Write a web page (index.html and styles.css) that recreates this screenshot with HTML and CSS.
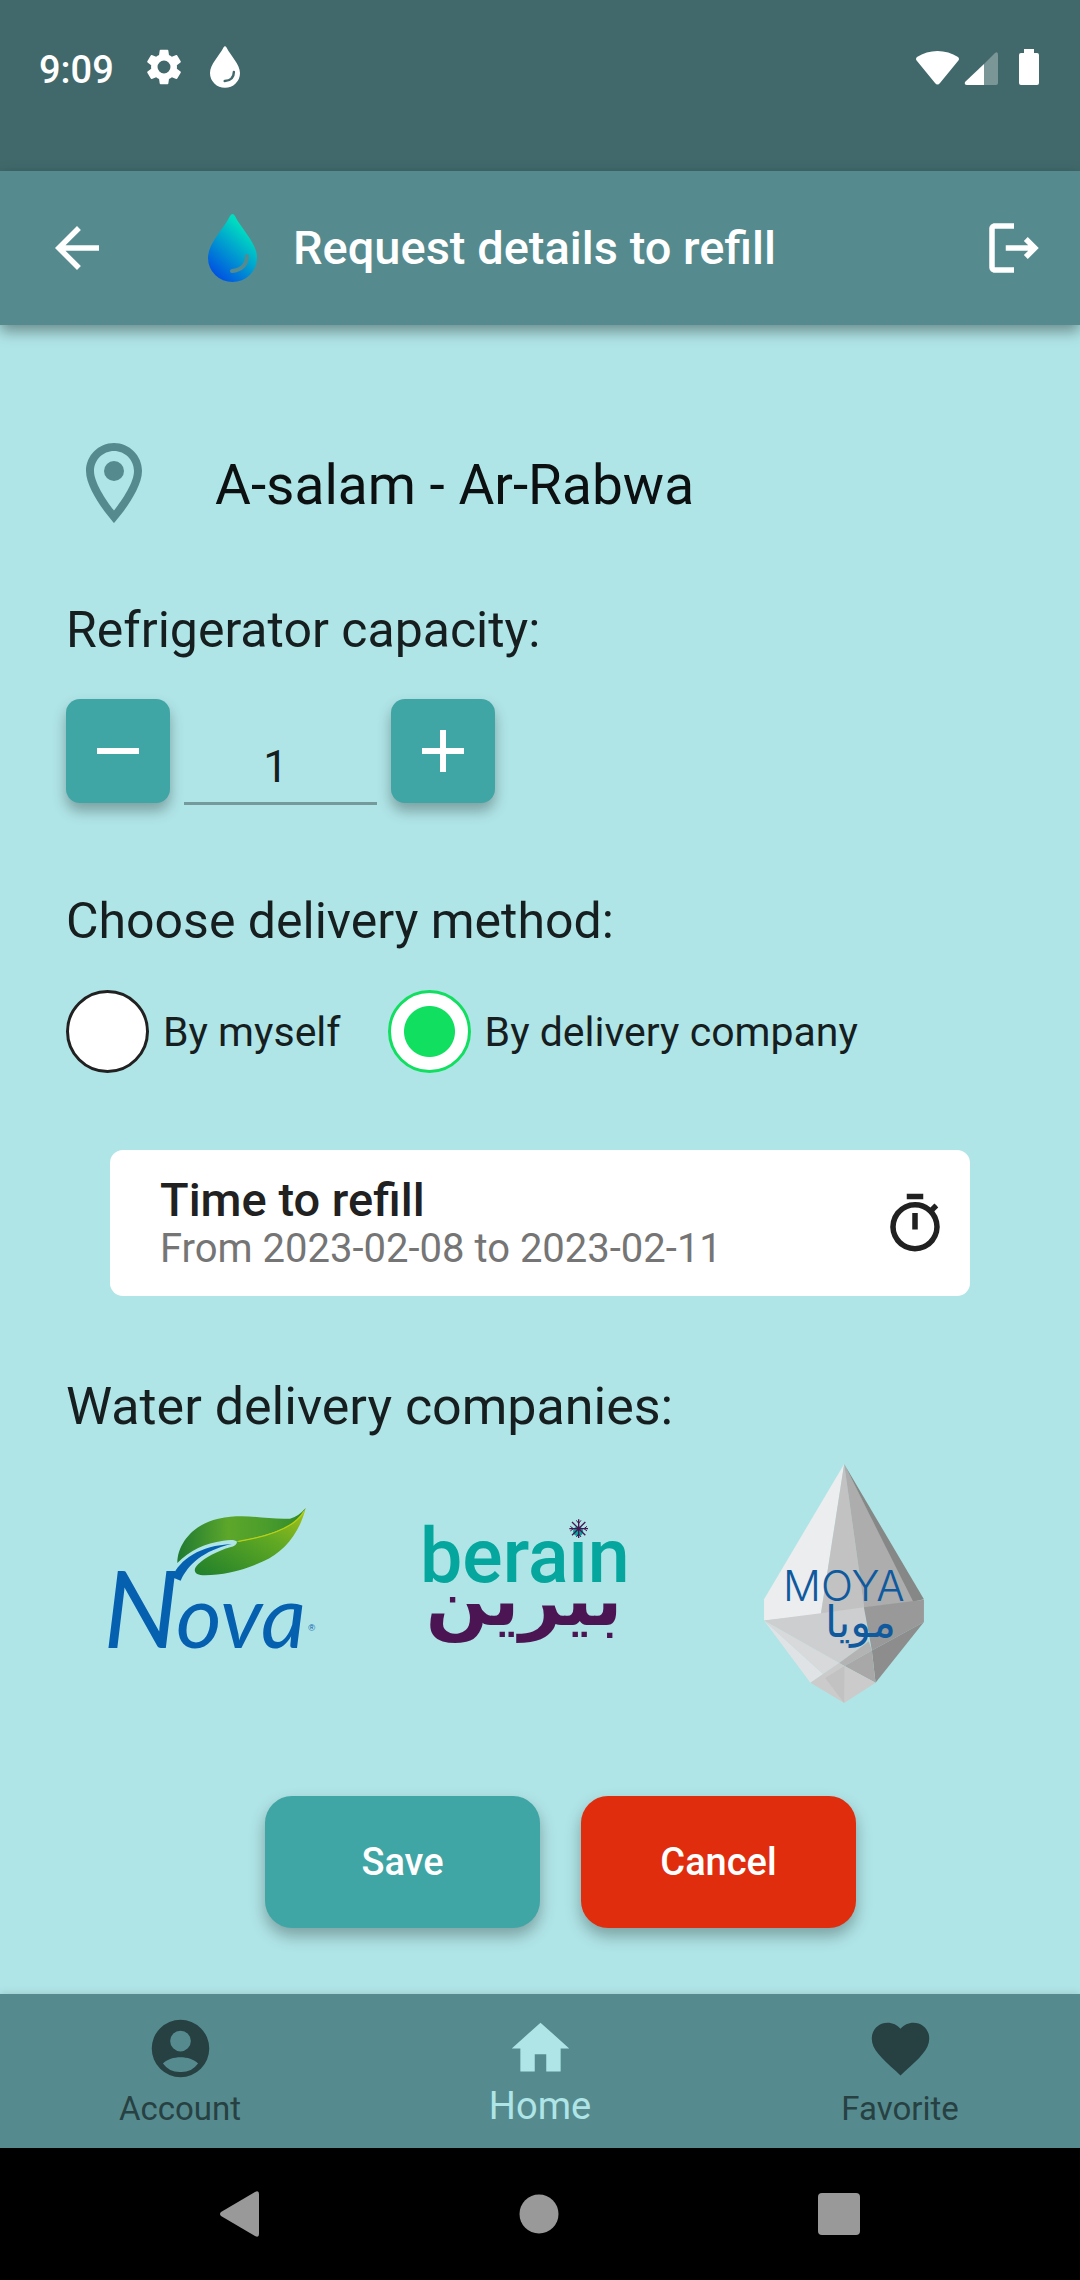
FILE: index.html
```html
<!DOCTYPE html>
<html lang="en">
<head>
<meta charset="utf-8">
<meta name="viewport" content="width=device-width, initial-scale=1">
<title>Request details to refill</title>
<link rel="stylesheet" href="styles.css">
</head>
<body>
<div class="status-bar">
  <span class="status-time">9:09</span>
  <svg class="status-gear" viewBox="2 2 20 20" aria-hidden="true"><path fill="currentColor" d="M19.14 12.94c.04-.3.06-.61.06-.94s-.02-.64-.07-.94l2.03-1.58a.49.49 0 0 0 .12-.61l-1.92-3.32a.49.49 0 0 0-.59-.22l-2.39.96a7 7 0 0 0-1.62-.94l-.36-2.54a.48.48 0 0 0-.48-.41h-3.84a.48.48 0 0 0-.47.41l-.36 2.54c-.59.24-1.13.57-1.62.94l-2.39-.96a.48.48 0 0 0-.59.22L2.74 8.87a.48.48 0 0 0 .12.61l2.03 1.58a6 6 0 0 0 0 1.88l-2.03 1.58a.49.49 0 0 0-.12.61l1.92 3.32c.12.22.37.29.59.22l2.39-.96c.5.38 1.03.7 1.62.94l.36 2.54c.05.24.24.41.48.41h3.84c.24 0 .44-.17.47-.41l.36-2.54a7 7 0 0 0 1.62-.94l2.39.96c.22.08.47 0 .59-.22l1.92-3.32a.48.48 0 0 0-.12-.61zM12 15.6a3.6 3.6 0 1 1 0-7.2 3.6 3.6 0 0 1 0 7.2z"/></svg>
  <svg class="status-drop" viewBox="0 0 49 68" aria-hidden="true"><path fill="currentColor" d="M22 2Q24.500-2 27 2C34 16 49 29 49 44a24.500 24 0 0 1-49 0C0 29 15 16 22 2z"/><path d="M39 42c0 9-6 14-15 15" fill="none" stroke="#41696b" stroke-width="4" stroke-linecap="round"/></svg>
  <span class="status-signals">
    <svg width="43" height="34" viewBox="0 0 43 34" aria-hidden="true"><path fill="currentColor" d="M1 10Q-1 8 1 6C13-2 30-2 42 6q2 2 0 4L24 32q-2.500 3-5 0z"/></svg>
    <svg width="33" height="33" viewBox="0 0 33 33" aria-hidden="true"><path fill="#fff" opacity=".3" d="M19 12 30 1q3-2 3 2v28q0 2-2 2H19z"/><path fill="currentColor" d="M19 12v21H2q-3 0-2-3z"/></svg>
    <svg class="status-battery" width="20" height="36" viewBox="0 0 20 36" aria-hidden="true"><path fill="currentColor" d="M5 0h10v4h3q2 0 2 2v28q0 2-2 2H2q-2 0-2-2V6q0-2 2-2h3z"/></svg>
  </span>
</div>

<header class="app-bar">
  <button class="icon-button" type="button" aria-label="Back"><svg class="icon" viewBox="0 0 24 24" aria-hidden="true"><path fill="currentColor" d="M20 11H7.830l5.590-5.590L12 4l-8 8 8 8 1.410-1.410L7.830 13H20z"/></svg></button>
  <svg class="brand" viewBox="0 0 49 68" aria-hidden="true">
    <defs><linearGradient id="water" x1=".75" y1=".1" x2=".2" y2=".95"><stop offset=".1" stop-color="#00ddc0"/><stop offset="1" stop-color="#0050e2"/></linearGradient></defs>
    <path fill="url(#water)" d="M22 2Q24.500-2 27 2C34 16 49 29 49 44a24.500 24 0 0 1-49 0C0 29 15 16 22 2z"/><path d="M39 42c0 9-6 14-15 15" fill="none" stroke="#558b8e" stroke-width="4" stroke-linecap="round"/>
  </svg>
  <h1 class="app-title">Request details to refill</h1>
  <button class="icon-button" type="button" aria-label="Log out"><svg class="icon" viewBox="0 0 24 24" aria-hidden="true"><path fill="currentColor" d="m17 8-1.410 1.410L17.170 11H9v2h8.170l-1.580 1.580L17 16l4-4zM5 5h7V3H5c-1.100 0-2 .9-2 2v14c0 1.100.9 2 2 2h7v-2H5z"/></svg></button>
</header>

<main class="content">
  <div class="location">
    <svg class="pin" viewBox="0 0 24 24" aria-hidden="true"><path fill="currentColor" d="M12 2C8.130 2 5 5.130 5 9c0 5.250 7 13 7 13s7-7.750 7-13c0-3.870-3.130-7-7-7zM7 9c0-2.760 2.240-5 5-5s5 2.240 5 5c0 2.880-2.880 7.190-5 9.880C9.920 16.210 7 11.850 7 9z"/><circle fill="currentColor" cx="12" cy="9" r="2.500"/></svg>
    <p class="place">A-salam - Ar-Rabwa</p>
  </div>

  <label class="section-title" for="capacity">Refrigerator capacity:</label>
  <div class="stepper">
    <button class="step" type="button" aria-label="Decrease"><svg width="42" height="42" viewBox="0 0 42 42" aria-hidden="true"><path d="M0 21h42" stroke="currentColor" stroke-width="6"/></svg></button>
    <input class="step-value" id="capacity" type="text" inputmode="numeric" value="1">
    <button class="step" type="button" aria-label="Increase"><svg width="42" height="42" viewBox="0 0 42 42" aria-hidden="true"><path d="M0 21h42M21 0v42" stroke="currentColor" stroke-width="6"/></svg></button>
  </div>

  <h2 class="section-title section-method" id="method">Choose delivery method:</h2>
  <div class="choices" role="radiogroup" aria-labelledby="method">
    <label class="choice"><input class="radio" type="radio" name="method"><span>By myself</span></label>
    <label class="choice"><input class="radio" type="radio" name="method" checked><span>By delivery company</span></label>
  </div>

  <button class="time-card" type="button">
    <span class="time-text">
      <span class="time-title">Time to refill</span>
      <span class="time-range">From 2023-02-08 to 2023-02-11</span>
    </span>
    <svg class="icon" viewBox="0 0 24 24" aria-hidden="true"><path fill="currentColor" d="M15 1H9v2h6zm-4 13h2V8h-2zm8.030-6.610 1.420-1.420c-.43-.51-.9-.99-1.410-1.410l-1.420 1.420A8.960 8.960 0 0 0 12 4a9 9 0 1 0 7.030 3.390zM12 20a7 7 0 1 1 0-14 7 7 0 0 1 0 14z"/></svg>
  </button>

  <h2 class="section-title section-companies">Water delivery companies:</h2>
  <ul class="companies">
    <li>
      <svg class="nova" viewBox="57 82 621 456" role="img" aria-label="Nova">
        <defs>
          <linearGradient id="leaf-top" x1="0" x2="1"><stop offset="0" stop-color="#1f7a32"/><stop offset=".4" stop-color="#5da72a"/><stop offset=".7" stop-color="#4a9c2c"/><stop offset="1" stop-color="#2f8a2c"/></linearGradient>
          <linearGradient id="leaf-low" x1="0" x2="1" y1="1" y2="0"><stop offset="0" stop-color="#1f7f2c"/><stop offset=".6" stop-color="#5fa823"/><stop offset="1" stop-color="#a6c21a"/></linearGradient>
        </defs>
        <path fill="url(#leaf-top)" d="M262 247C262 190 310 130 385 114C470 96 530 118 600 114Q625 108 647 82Q632 124 590 140C540 162 490 174 441 183C436 177 420 177 400 180C345 188 300 208 262 247z"/>
        <path fill="url(#leaf-low)" d="M647 82C628 160 580 215 520 242C460 270 400 284 345 284C312 284 306 268 325 250C345 232 380 212 420 200Q440 195 441 184C500 172 560 158 600 134Q632 112 647 82z"/>
        <path fill="none" stroke="#b8cf12" stroke-width="4" d="M445 182C520 170 610 148 642 92"/>
        <path fill="#0560b0" d="M246 290C270 235 330 195 425 190C340 210 295 250 272 300z"/>
        <text class="nova-word" x="40" y="501" font-size="320">N</text>
        <text class="nova-word" x="258" y="501" font-size="264">ova</text>
        <text class="nova-mark" x="655" y="452">®</text>
      </svg>
    </li>
    <li>
      <svg class="berain" viewBox="72 60 696 381" role="img" aria-label="berain">
        <defs><g id="flake" fill="none" stroke="#4a1552" stroke-width="4"><path d="M0-28V28M-28 0H28M-20-20 20 20M20-20-20 20"/><path stroke-width="3" d="M-7-25 0-16 7-25M-7 25 0 16 7 25M-25-7-16 0-25 7M25-7 16 0 25 7"/></g></defs>
        <text class="berain-latin" x="60" y="246">berain</text>
        <text class="berain-arabic" x="372" y="376" text-anchor="middle" direction="rtl" lang="ar">بيرين</text>
        <use href="#flake" x="536" y="86"/>
      </svg>
    </li>
    <li>
      <svg class="moya" viewBox="73 43 479 716" role="img" aria-label="Moya">
        <path fill="#ebedef" d="M313 43 73 448v64l170-18z"/>
        <path fill="#c2c2c2" d="M313 43 243 494l130-20z"/>
        <path fill="#adadad" d="M313 43l60 431 150-18z"/>
        <path fill="#858887" d="M313 43 552 448l-32 8z"/>
        <path fill="#cdcecf" d="M73 512 243 490 373 472l14 102-89 65z"/>
        <path fill="#999" d="M372 472l180-22v66l-156 86z"/>
        <path fill="#8d8d8d" d="M396 602 552 516 407 698z"/>
        <path fill="#e0e3e5" d="M73 512 212 698l38-26z"/>
        <path fill="#d8d9da" d="M73 512 298 639l-48 33z"/>
        <path fill="#b3b3b3" d="M387 574l9 28-82 46-16-9z"/>
        <path fill="#a8a8a8" d="M396 602 407 698 314 648z"/>
        <path fill="#cbcbcb" d="M298 639 212 698l101 61 94-61-93-50z"/>
        <path fill="#c2c2c2" d="M314 648l-58 36 57 75z"/>
        <text class="moya-latin" x="312" y="454" text-anchor="middle">MOYA</text>
        <text class="moya-arabic" x="362" y="562" text-anchor="middle" direction="rtl" lang="ar">مويا</text>
      </svg>
    </li>
  </ul>

  <div class="actions">
    <button class="action action-save" type="button">Save</button>
    <button class="action action-cancel" type="button">Cancel</button>
  </div>
</main>

<nav class="tabs" aria-label="Main">
  <a class="tab" href="#account"><svg class="tab-icon" viewBox="0 0 24 24" aria-hidden="true"><path fill="currentColor" fill-rule="evenodd" d="M12 2a10 10 0 1 0 0 20 10 10 0 0 0 0-20zm0 3.800a3.600 3.600 0 1 1 0 7.200 3.600 3.600 0 0 1 0-7.200zM12 20.200A7.200 7.200 0 0 1 5.900 17.200C7.300 15.700 9.700 15 12 15s4.700.7 6.100 2.200A7.200 7.200 0 0 1 12 20.200z"/></svg><span>Account</span></a>
  <a class="tab tab-current" href="#home" aria-current="page"><svg class="tab-icon" viewBox="0 0 24 24" aria-hidden="true"><path fill="currentColor" d="M10 20v-6h4v6h5v-8h3L12 3 2 12h3v8z"/></svg><span>Home</span></a>
  <a class="tab" href="#favorite"><svg class="tab-icon" viewBox="0 0 24 24" aria-hidden="true"><path fill="currentColor" d="m12 21.350-1.450-1.320C5.400 15.360 2 12.280 2 8.500 2 5.420 4.420 3 7.500 3c1.740 0 3.410.81 4.500 2.090C13.090 3.810 14.760 3 16.500 3 19.580 3 22 5.420 22 8.500c0 3.780-3.400 6.860-8.550 11.540z"/></svg><span>Favorite</span></a>
</nav>

<div class="system-nav">
  <button class="system-button" type="button" aria-label="System back"><svg width="40" height="46" viewBox="0 0 40 46" aria-hidden="true"><path fill="currentColor" d="M1 21 35 1q4-2 4 2v40q0 4-4 2L1 25q-2-2 0-4z"/></svg></button>
  <button class="system-button" type="button" aria-label="System home"><svg width="40" height="40" viewBox="0 0 40 40" aria-hidden="true"><circle fill="currentColor" cx="20" cy="20" r="19.500"/></svg></button>
  <button class="system-button" type="button" aria-label="Overview"><svg width="42" height="42" viewBox="0 0 42 42" aria-hidden="true"><rect fill="currentColor" width="42" height="42" rx="4"/></svg></button>
</div>
</body>
</html>
```
FILE: styles.css
```css
* { box-sizing: border-box; }

body {
  margin: 0;
  min-height: 100vh;
  display: flex;
  flex-direction: column;
  background: #b0e5e7;
  color: #161e1f;
  font-family: Roboto, "Noto Sans", sans-serif;
}

h1, h2, p, ul { margin: 0; padding: 0; }
svg { display: block; flex: none; overflow: visible; }
button {
  margin: 0;
  padding: 0;
  border: 0;
  background: none;
  color: inherit;
  font: inherit;
}

.icon { width: 66px; height: 66px; }

/* Status bar */
.status-bar {
  display: flex;
  align-items: flex-start;
  height: 171px;
  padding: 46px 41px 0 39px;
  background: #41696b;
  color: #fff;
}
.status-time { font-size: 38px; line-height: 48px; font-weight: 500; }
.status-gear { width: 36px; height: 36px; margin: 3px 0 0 32px; }
.status-drop { width: 30px; height: 42px; margin-left: 28px; }
.status-signals {
  display: flex;
  align-items: flex-end;
  gap: 6px;
  height: 39px;
  margin-left: auto;
}
.status-battery { margin-left: 15px; }

/* App bar */
.app-bar {
  display: flex;
  align-items: center;
  height: 154px;
  padding: 0 33px 0 44px;
  background: #558b8e;
  color: #fff;
  box-shadow: 0 6px 14px rgba(0, 0, 0, .4);
}
.brand { width: 49px; height: 68px; margin: 0 36px 0 98px; }
.app-title { flex: 1; font-size: 47px; line-height: 60px; font-weight: 500; }

/* Form */
.content { flex: 1; padding: 110px 66px 66px; }
.location { display: flex; align-items: center; gap: 53px; margin-bottom: 69px; }
.pin { width: 96px; height: 96px; color: #558b8e; }
.place { padding-top: 4px; color: #0c1010; font-size: 55px; line-height: 66px; }
.section-title {
  display: block;
  margin-bottom: 39px;
  font-size: 50px;
  line-height: 60px;
  font-weight: 400;
}
.stepper { display: flex; gap: 14px; }
.step {
  display: grid;
  place-items: center;
  width: 104px;
  height: 104px;
  border-radius: 14px;
  background: #40a5a5;
  color: #fff;
  box-shadow: 0 8px 14px rgba(0, 0, 0, .3);
}
.step-value {
  width: 193px;
  height: 106px;
  padding: 33px 10px 0 0;
  border: 0;
  border-bottom: 3px solid #76999b;
  border-radius: 0;
  background: none;
  color: inherit;
  font: 44px/70px Roboto, sans-serif;
  text-align: center;
}
.section-method { margin-top: 86px; }
.choices { display: flex; gap: 47px; }
.choice { display: flex; align-items: center; gap: 14px; font-size: 41px; line-height: 48px; }
.radio {
  appearance: none;
  flex: none;
  width: 83px;
  height: 83px;
  margin: 0;
  border: 3px solid #212121;
  border-radius: 50%;
  background: #fff;
}
.radio:checked {
  border-color: #11df60;
  background: radial-gradient(circle, #11df60 25px, #fff 26px);
}
.time-card {
  display: flex;
  align-items: center;
  justify-content: space-between;
  width: calc(100% - 88px);
  min-height: 146px;
  margin: 77px 44px 81px;
  padding: 2px 22px 0 50px;
  border-radius: 13px;
  background: #fff;
  color: #212121;
  text-align: left;
}
.time-text { display: flex; flex-direction: column; }
.time-title { font-size: 47px; line-height: 50px; font-weight: 500; }
.time-range { color: #757575; font-size: 40px; line-height: 48px; }

/* Companies */
.section-companies { margin-bottom: 27px; font-size: 52px; }
.companies {
  display: flex;
  align-items: center;
  gap: 108px;
  padding-left: 43px;
  list-style: none;
}
.nova { width: 207px; height: 152px; }
.nova-word { fill: #0560b0; font-family: Lato, sans-serif; font-style: italic; }
.nova-mark { fill: #0560b0; font-family: "Liberation Sans", sans-serif; font-size: 28px; }
.berain { width: 232px; height: 127px; }
.berain-latin { fill: #05a69d; font-family: Roboto, sans-serif; font-size: 226px; font-weight: 500; }
.berain-arabic { fill: #4a1552; font-family: "DejaVu Sans", sans-serif; font-size: 220px; font-weight: 700; }
.moya { width: 160px; height: 239px; }
.moya-latin { fill: #0f5a9e; font-family: Inter, sans-serif; font-size: 126px; font-weight: 300; }
.moya-arabic { fill: #0f5a9e; font-family: "DejaVu Sans", sans-serif; font-size: 130px; font-weight: 400; }

/* Buttons */
.actions { display: flex; justify-content: center; gap: 41px; margin-top: 93px; padding-left: 41px; }
.action {
  width: 275px;
  height: 132px;
  border-radius: 27px;
  color: #fff;
  font-size: 38px;
  font-weight: 500;
  box-shadow: 0 8px 16px rgba(0, 0, 0, .3);
}
.action-save { background: #40a5a5; }
.action-cancel { background: #e02d0e; }

/* Bottom tabs */
.tabs {
  display: grid;
  grid-template-columns: repeat(3, 1fr);
  height: 154px;
  background: #558b8e;
  box-shadow: 0 0 8px rgba(0, 0, 0, .15);
}
.tab {
  display: flex;
  flex-direction: column;
  align-items: center;
  padding-top: 20px;
  color: #274143;
  font-size: 33px;
  line-height: 52px;
  text-decoration: none;
}
.tab-current { color: #b0e5e7; font-size: 38px; line-height: 46px; }
.tab-icon { width: 69px; height: 69px; }

/* System navigation */
.system-nav {
  display: flex;
  align-items: center;
  justify-content: space-between;
  height: 132px;
  padding: 0 220px;
  background: #000;
  color: #999;
}
```
